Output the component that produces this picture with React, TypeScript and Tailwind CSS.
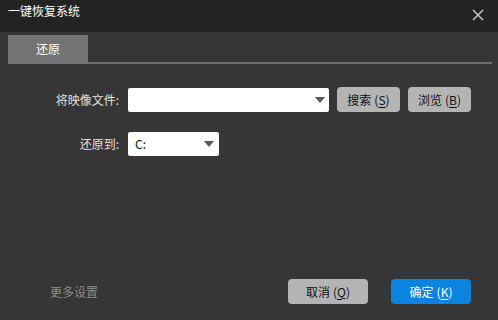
import React from 'react';

const font = { fontFamily: '"Noto Sans CJK SC", "Noto Sans", sans-serif' };

const Caret = () => (
  <svg width="10" height="6" viewBox="0 0 10 6" className="shrink-0">
    <path d="M0 0h10L5 6z" fill="#5a5a5a" />
  </svg>
);

const Key = ({ k }: { k: string }) => (
  <span className="ml-[3px]">
    (<span className="underline underline-offset-2">{k}</span>)
  </span>
);

export default function App() {
  return (
    <div className="w-[498px] h-[320px] flex flex-col bg-[#363636] text-[12px] select-none" style={font}>
      {/* Title bar */}
      <div className="h-8 shrink-0 bg-[#232323] flex items-center justify-between pl-2 pr-[14px]">
        <span className="text-white text-[12px] leading-none -mt-[10px]">一键恢复系统</span>
        <svg width="12" height="12" viewBox="0 0 12 12" className="-mt-[3px]">
          <path d="M1 1l10 10M11 1L1 11" stroke="#d0d0d0" strokeWidth="1.4" />
        </svg>
      </div>

      {/* Tabs */}
      <div className="px-2 pt-[3px] pr-[6px]">
        <div className="flex border-b-2 border-[#6e6e6e]">
          <div className="w-20 h-[27px] bg-[#737373] text-white flex items-center justify-center -mb-[2px] h-[29px] pb-[2px]">
            还原
          </div>
        </div>
      </div>

      {/* Form */}
      <div className="flex flex-col gap-5 pt-[23px]">
        <div className="flex items-center">
          <span className="w-[119px] text-right text-[#e0e0e0]">将映像文件:</span>
          <div className="ml-[9px] w-[201px] h-6 bg-white rounded-[2px] flex items-center justify-end pr-[4px]">
            <Caret />
          </div>
          <button className="ml-[8px] w-[63px] h-[25px] bg-[#b4b4b4] rounded-[4px] text-[#111] flex items-center justify-center">
            搜索<Key k="S" />
          </button>
          <button className="ml-[8px] w-[63px] h-[25px] bg-[#b4b4b4] rounded-[4px] text-[#111] flex items-center justify-center">
            浏览<Key k="B" />
          </button>
        </div>
        <div className="flex items-center">
          <span className="w-[119px] text-right text-[#e0e0e0]">还原到:</span>
          <div className="ml-[9px] w-[91px] h-6 bg-white rounded-[2px] flex items-center justify-between pl-[7px] pr-[5px] text-[#111]">
            <span>C:</span>
            <Caret />
          </div>
        </div>
      </div>

      <div className="flex-1" />

      {/* Footer */}
      <div className="flex items-center pl-[50px] pr-[27px] pb-4">
        <span className="text-[#8c8c8c]">更多设置</span>
        <div className="flex-1" />
        <button className="w-20 h-[25px] bg-[#b4b4b4] rounded-[4px] text-[#111] flex items-center justify-center">
          取消<Key k="Q" />
        </button>
        <button className="ml-[23px] w-20 h-[25px] bg-[#0a84e0] rounded-[4px] text-white flex items-center justify-center">
          确定<Key k="K" />
        </button>
      </div>
    </div>
  );
}
